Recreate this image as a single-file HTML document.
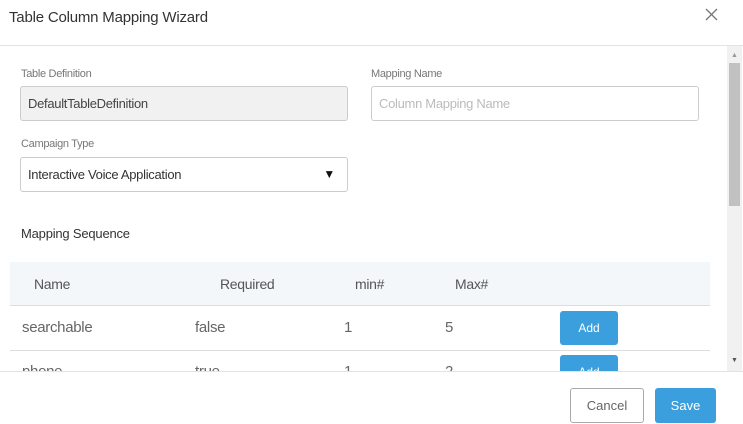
<!DOCTYPE html>
<html><head><style>
*{margin:0;padding:0;box-sizing:border-box}
body{width:743px;height:424px;overflow:hidden;background:#fff;font-family:"Liberation Sans",sans-serif;color:#333;position:relative}
.a{position:absolute;white-space:nowrap}
.lbl{font-size:11px;color:#777;letter-spacing:-0.3px}
.inp{position:absolute;border:1px solid #ccc;border-radius:3px;font-size:13px;padding-left:7px;line-height:33px;letter-spacing:-0.3px}
.th{font-size:14px;color:#555;letter-spacing:-0.3px}
.td{font-size:15px;color:#666;letter-spacing:-0.3px}
.btn{position:absolute;background:#3a9fdc;color:#fff;border-radius:3px;font-size:12px;text-align:center}
</style></head><body>
<div class="a" style="left:9px;top:9px;font-size:15px;color:#333;letter-spacing:-0.2px">Table Column Mapping Wizard</div>
<svg class="a" style="left:705px;top:8px" width="13" height="13"><path d="M1 1L12 12M12 1L1 12" stroke="#777" stroke-width="1.3"/></svg>
<div class="a" style="left:0;top:45px;width:743px;height:1px;background:#e3e3e3"></div>
<div class="a lbl" style="left:21px;top:68px">Table Definition</div>
<div class="inp" style="left:20px;top:86px;width:328px;height:35px;background:#f1f1f1;color:#444">DefaultTableDefinition</div>
<div class="a lbl" style="left:371px;top:68px">Mapping Name</div>
<div class="inp" style="left:371px;top:86px;width:328px;height:35px;color:#bbb">Column Mapping Name</div>
<div class="a lbl" style="left:21px;top:138px">Campaign Type</div>
<div class="inp" style="left:20px;top:157px;width:328px;height:35px;color:#333">Interactive Voice Application<span style="position:absolute;right:12px;top:0;font-size:12px;color:#111">▼</span></div>
<div class="a" style="left:21px;top:226px;font-size:13px;color:#333;letter-spacing:-0.2px">Mapping Sequence</div>
<div class="a" style="left:10px;top:262px;width:700px;height:44px;background:#f3f7fa;border-bottom:1px solid #ddd"></div>
<div class="a th" style="left:34px;top:276px">Name</div>
<div class="a th" style="left:220px;top:276px">Required</div>
<div class="a th" style="left:355px;top:276px">min#</div>
<div class="a th" style="left:455px;top:276px">Max#</div>
<div class="a td" style="left:22px;top:319px">searchable</div>
<div class="a td" style="left:195px;top:319px">false</div>
<div class="a td" style="left:344px;top:319px">1</div>
<div class="a td" style="left:445px;top:319px">5</div>
<div class="btn" style="left:560px;top:311px;width:58px;height:34px;line-height:34px">Add</div>
<div class="a" style="left:10px;top:350px;width:700px;height:1px;background:#ddd"></div>
<div class="a td" style="left:22px;top:363px">phone</div>
<div class="a td" style="left:195px;top:363px">true</div>
<div class="a td" style="left:344px;top:363px">1</div>
<div class="a td" style="left:445px;top:363px">2</div>
<div class="btn" style="left:560px;top:355px;width:58px;height:34px;line-height:34px">Add</div>
<div class="a" style="left:727px;top:46px;width:15px;height:325px;background:#f1f1f1"></div>
<div class="a" style="left:729px;top:63px;width:11px;height:143px;background:#c1c1c1"></div>
<div class="a" style="left:731px;top:52px;font-size:7px;color:#999">▲</div>
<div class="a" style="left:731px;top:357px;font-size:7px;color:#555">▼</div>
<div class="a" style="left:0;top:371px;width:743px;height:53px;background:#fff;border-top:1px solid #e3e3e3"></div>
<div class="a" style="left:570px;top:388px;width:74px;height:35px;border:1px solid #aaa;border-radius:3px;font-size:13px;color:#666;text-align:center;line-height:33px">Cancel</div>
<div class="btn" style="left:655px;top:388px;width:61px;height:35px;line-height:35px;font-size:13px">Save</div>
</body></html>
